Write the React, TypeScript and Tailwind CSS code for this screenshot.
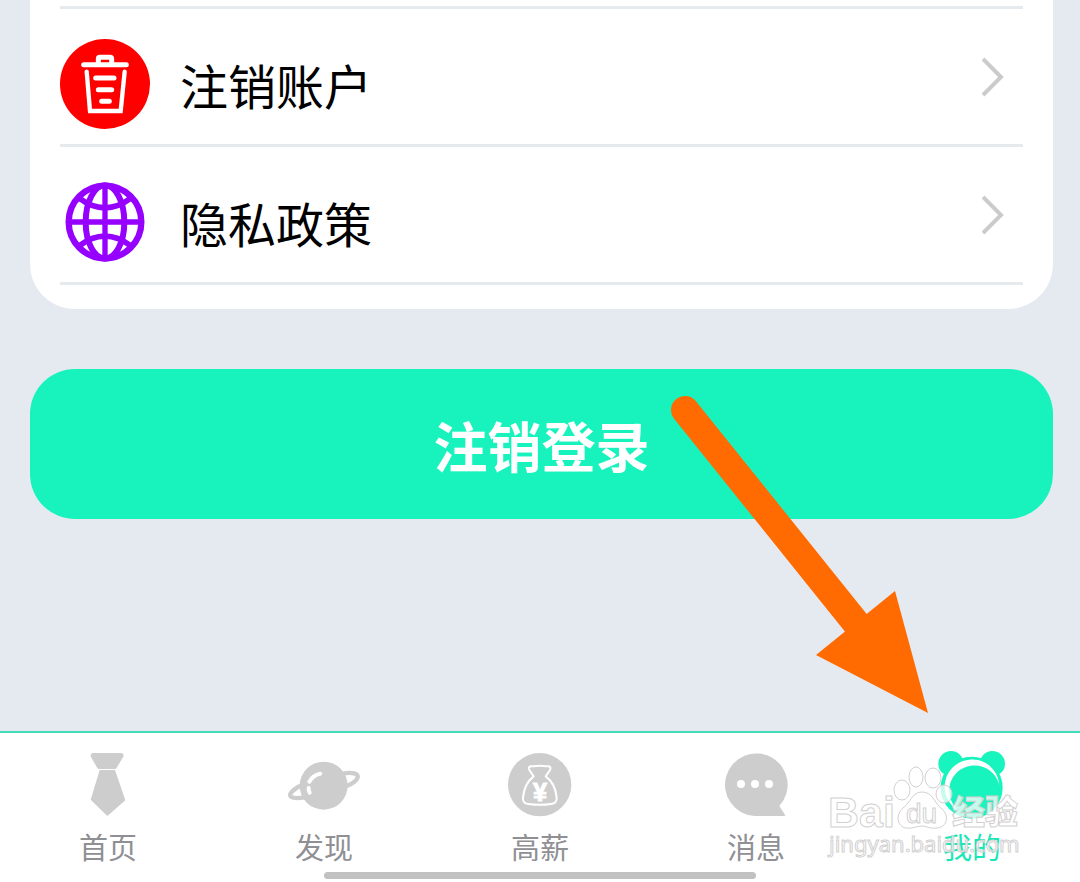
import type { ReactNode } from "react";

function TrashIcon() {
  return (
    <svg viewBox="0 0 270 270" className="size-[90px]" fill="none" stroke="#fff" strokeWidth="15" strokeLinecap="round" aria-hidden="true">
      <circle cx="135" cy="135" r="135" fill="#fe0000" stroke="none" />
      <path d="M71 77H199" />
      <path d="M115 72V60Q115 55 120 55H150Q155 55 155 60V72" strokeLinejoin="round" />
      <path d="M80 98L90 216H182L194 98" strokeWidth="13" />
      <path d="M107 117H162M115 152H155M125 187H148" strokeWidth="15" />
    </svg>
  );
}

function GlobeIcon() {
  return (
    <svg viewBox="0 0 270 270" className="size-[90px]" fill="none" stroke="#9500ff" strokeWidth="16" aria-hidden="true">
      <circle cx="135" cy="135" r="109" strokeWidth="19" />
      <ellipse cx="135" cy="135" rx="58" ry="110" strokeWidth="18" />
      <path d="M135 25V245M25 135H245" />
      <path d="M57 63Q135 122 213 63M57 207Q135 148 213 207" strokeWidth="17" />
    </svg>
  );
}

function TieIcon() {
  return (
    <svg viewBox="0 0 192 192" className="h-16 w-16" fill="#cdcdcd" aria-hidden="true">
      <path d="M51 0H136Q145 2 142 11L121 46Q120 48 117 48H69Q66 48 64 45L45 12Q41 2 51 0Z" />
      <path d="M71 51H117L148 142L94 189L44 140Z" />
    </svg>
  );
}

function PlanetIcon() {
  return (
    <svg viewBox="0 0 216 192" className="h-16 w-[72px]" fill="none" stroke="#cdcdcd" strokeWidth="13" strokeLinecap="round" aria-hidden="true">
      <circle cx="107" cy="98" r="72" fill="#cdcdcd" stroke="none" />
      <path d="M38 98C12 110 2 124 9 131C16 136 32 136 50 133" />
      <path d="M168 61C192 57 209 62 209 70C210 80 194 92 176 99" />
      <path d="M64 86Q75 66 97 62M62 105Q61 111 65 119" stroke="#fff" strokeWidth="12" />
    </svg>
  );
}

function MoneyIcon() {
  return (
    <svg viewBox="0 0 192 192" className="h-16 w-16" aria-hidden="true">
      <circle cx="95" cy="95" r="95" fill="#cdcdcd" />
      <path
        d="M77 70L64 51Q59 40 70 40Q80 40 85 39Q96 37 107 39Q114 40 120 40Q131 40 126 51L113 70Q142 91 146 134Q147 151 129 153Q95 158 61 153Q43 151 45 134Q49 91 77 70Z"
        fill="none"
        stroke="#fff"
        strokeWidth="6"
        strokeLinejoin="round"
      />
      <text x="96" y="143" textAnchor="middle" fontSize="76" fontWeight="700" fontFamily="Liberation Sans, sans-serif" fill="#fff" stroke="#fff" strokeWidth="3">¥</text>
    </svg>
  );
}

function MessageIcon() {
  return (
    <svg viewBox="0 0 192 192" className="h-16 w-16" fill="#cdcdcd" aria-hidden="true">
      <path d="M92 189A94 94 0 1 1 166 159L183 185Q185 189 180 189Z" />
      <g fill="#fff">
        <circle cx="51" cy="93" r="12" />
        <circle cx="93" cy="93" r="12" />
        <circle cx="135" cy="93" r="12" />
      </g>
    </svg>
  );
}

function BearIcon() {
  return (
    <svg viewBox="0 0 216 192" className="h-16 w-[72px] overflow-visible" fill="#18f4bd" aria-hidden="true">
      <circle cx="45" cy="32" r="38" />
      <circle cx="169" cy="32" r="38" />
      <circle cx="107" cy="104" r="93" />
      <path d="M190 98A82 82 0 1 0 70 174A76 76 0 1 1 190 98Z" fill="#fff" />
    </svg>
  );
}

function Watermark() {
  return (
    <svg viewBox="0 0 200 100" className="pointer-events-none absolute top-7 right-[55px] h-[100px] w-[200px]" fill="#fff" fillOpacity="0.75" stroke="#d2d0d0" strokeWidth="1" aria-hidden="true">
      <text x="3" y="66" fontSize="43" fontWeight="700" fontFamily="Liberation Sans, sans-serif">Bai</text>
      <ellipse cx="77" cy="29" rx="8" ry="10" />
      <ellipse cx="91" cy="16" rx="7" ry="10" />
      <ellipse cx="108" cy="17" rx="8" ry="10" />
      <ellipse cx="119" cy="33" rx="8" ry="9" />
      <path d="M97 31C108 31 109 42 117 48C124 54 123 66 112 67C105 68 101 65 97 65C92 65 88 68 81 67C71 65 71 53 78 47C86 41 87 31 97 31Z" />
      <text x="81" y="62" fontSize="28" fontFamily="Liberation Sans, sans-serif">du</text>
      <text x="127" y="63" fontSize="33" fontWeight="900" fontFamily="Noto Sans CJK SC, sans-serif">经验</text>
      <text x="4" y="91" fontSize="22" fontFamily="Noto Sans, sans-serif">jingyan.baidu.com</text>
    </svg>
  );
}

function MenuRow({ icon, label }: { icon: ReactNode; label: string }) {
  return (
    <a href="#" className="flex h-[138px] items-center justify-between border-b-[3px] border-[#e5eaef] pr-[19px]">
      <span className="flex items-center gap-[30px] pt-[15px]">
        {icon}
        <span className="text-[48px] leading-[56px] text-black">{label}</span>
      </span>
      <svg viewBox="0 0 22 40" className="h-10 w-[22px]" fill="none" stroke="#cbcbcb" strokeWidth="4" aria-hidden="true">
        <path d="M1 2L19 20L1 38" />
      </svg>
    </a>
  );
}

const tabs = [
  { label: "首页", icon: <TieIcon /> },
  { label: "发现", icon: <PlanetIcon /> },
  { label: "高薪", icon: <MoneyIcon /> },
  { label: "消息", icon: <MessageIcon /> },
  { label: "我的", icon: <BearIcon />, active: true },
];

export default function App() {
  return (
    <div className="relative flex min-h-screen flex-col overflow-hidden bg-[#e5eaf1] font-['Noto_Sans_CJK_SC',sans-serif]">
      <main className="pr-[27px] pb-16 pl-[30px]">
        <section className="rounded-b-[45px] bg-white px-[30px] pt-1.5 pb-6">
          <div className="border-t-[3px] border-[#e5eaef]">
            <MenuRow icon={<TrashIcon />} label="注销账户" />
            <MenuRow icon={<GlobeIcon />} label="隐私政策" />
          </div>
        </section>
        <button className="mt-[60px] h-[150px] w-full rounded-[45px] bg-[#18f3bd] text-[54px] font-bold text-white">
          注销登录
        </button>
      </main>

      <nav className="relative mt-auto border-t-2 border-[#43dcbb] bg-white pt-5">
        <div className="grid grid-cols-5">
          {tabs.map((tab) => (
            <a key={tab.label} href="#" className="flex flex-col items-center gap-[9px]">
              {tab.icon}
              <span className={tab.active ? "text-[29px] leading-10 text-[#18e8b5]" : "text-[29px] leading-10 text-[#8f8f94]"}>
                {tab.label}
              </span>
            </a>
          ))}
        </div>
        {/* home indicator */}
        <div className="mx-auto mt-1.5 mb-[3px] h-[7px] w-2/5 rounded-full bg-[#c1c1c1]" />
        <Watermark />
      </nav>

      {/* pointer to the profile tab */}
      <svg viewBox="0 0 260 320" className="pointer-events-none absolute top-[395px] left-[670px] h-80 w-[260px]" fill="#ff6b00" aria-hidden="true">
        <path d="M15 15L190 233" stroke="#ff6b00" strokeWidth="28" strokeLinecap="round" />
        <path d="M258 318L225 196L146 260Z" />
      </svg>
    </div>
  );
}
